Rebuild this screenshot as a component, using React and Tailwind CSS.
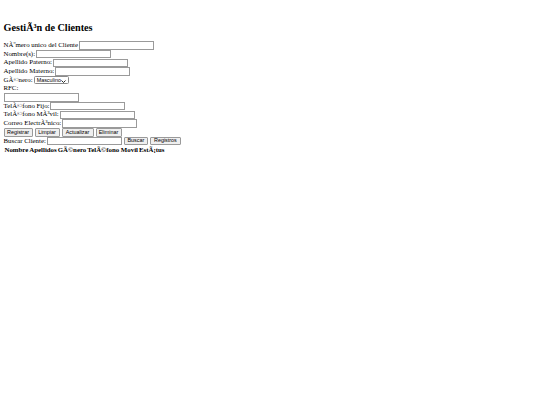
import React from 'react';

const labelFont = { fontFamily: '"Liberation Serif", serif' };

function Field({ label }) {
  return (
    <div className="flex h-[8.75px] items-center">
      <span className="whitespace-nowrap">{label}</span>
      <input
        type="text"
        className="ml-[1px] box-border h-[8.5px] w-[75px] border border-[#9a9a9a] bg-white outline-none"
      />
    </div>
  );
}

function Btn({ children, w }) {
  return (
    <button
      type="button"
      className={`mr-[2px] box-border flex h-[8.5px] ${w} items-center justify-center rounded-[1px] border border-[#9a9a9a] bg-[#efefef] p-0 font-['Liberation_Sans',sans-serif] text-[5.4px] leading-none text-black`}
    >
      {children}
    </button>
  );
}

export default function App() {
  return (
    <div className="min-h-[405px] w-[540px] bg-white pl-[3.5px] text-[6.85px] leading-none text-black" style={labelFont}>
      {/* Título */}
      <h2 className="pt-[21.5px] text-[10.2px] font-bold leading-[12px]">GestiÃ³n de Clientes</h2>

      <div className="mt-[7.5px]">
        <Field label="NÃºmero unico del Cliente" />
        <Field label="Nombre(s):" />
        <Field label="Apellido Paterno:" />
        <Field label="Apellido Materno:" />
        <div className="flex h-[8.75px] items-center">
          <span>GÃ©nero:</span>
          <div className="relative ml-[1px] box-border flex h-[8px] w-[35px] items-center rounded-[1.5px] border border-[#8a8a8a] bg-white pl-[2px] font-['Liberation_Sans',sans-serif] text-[5.4px] leading-none">
            Masculino
            <svg className="absolute right-[1.5px] top-[2.2px] h-[3px] w-[5px]" viewBox="0 0 10 6" fill="none">
              <path d="M1 1l4 4 4-4" stroke="#111" strokeWidth="1.8" />
            </svg>
          </div>
        </div>
        <div className="flex h-[8.25px] items-center">RFC:</div>
        <div className="flex h-[8.75px] items-center">
          <input type="text" className="box-border h-[8.5px] w-[75px] border border-[#9a9a9a] bg-white outline-none" />
        </div>
        <Field label="TelÃ©fono Fijo:" />
        <Field label="TelÃ©fono MÃ³vil:" />
        <Field label="Correo ElectrÃ³nico:" />

        {/* Acciones */}
        <div className="flex h-[8.75px] items-center">
          <Btn w="w-[29px]">Registrar</Btn>
          <Btn w="w-[25px]">Limpiar</Btn>
          <Btn w="w-[32px]">Actualizar</Btn>
          <Btn w="w-[26px]">Eliminar</Btn>
        </div>

        {/* Búsqueda */}
        <div className="flex h-[8.75px] items-center">
          <span className="whitespace-nowrap">Buscar Cliente:</span>
          <input type="text" className="ml-[1px] mr-[2px] box-border h-[8.5px] w-[75px] border border-[#9a9a9a] bg-white outline-none" />
          <Btn w="w-[24px]">Buscar</Btn>
          <Btn w="w-[31px]">Registros</Btn>
        </div>

        {/* Tabla */}
        <table className="mt-[0.5px] border-separate border-spacing-[1.5px]">
          <thead>
            <tr>
              <th className="p-0 font-bold">Nombre</th>
              <th className="p-0 font-bold">Apellidos</th>
              <th className="p-0 font-bold">GÃ©nero</th>
              <th className="p-0 font-bold">TelÃ©fono Movil</th>
              <th className="p-0 font-bold">EstÃ¡tus</th>
            </tr>
          </thead>
          <tbody></tbody>
        </table>
      </div>
    </div>
  );
}
